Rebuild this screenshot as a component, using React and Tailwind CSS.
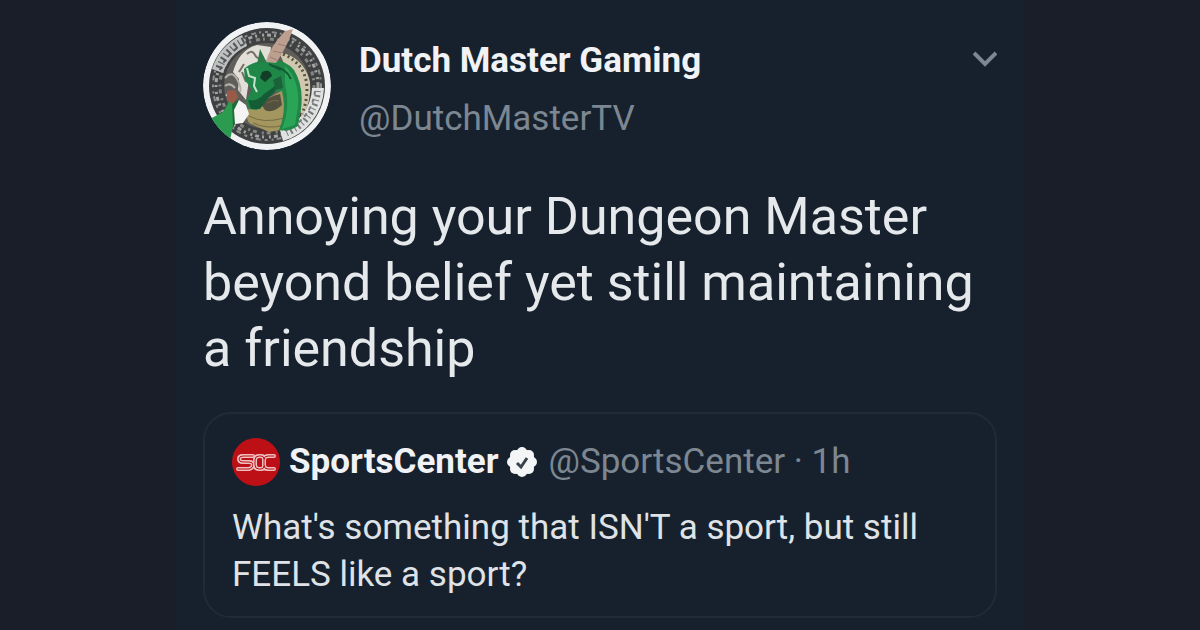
// Dark themed post with a quoted post below it.

function DragonAvatar() {
  return (
    <svg viewBox="0 0 128 128" className="size-32 shrink-0" role="img" aria-label="Dutch Master Gaming">
      <defs>
        <clipPath id="avatar-disc">
          <circle cx="64" cy="64" r="64" />
        </clipPath>
      </defs>
      <g clipPath="url(#avatar-disc)">
        <circle cx="64" cy="64" r="64" fill="#f1f2f4" />
        <circle cx="64" cy="64" r="58" fill="#3f4041" />
        {/* ring ornaments */}
        <circle cx="64" cy="64" r="54" fill="none" stroke="#8d8f8f" strokeWidth="2" strokeDasharray="3 4 5 3 2 4" />
        <circle cx="64" cy="64" r="51" fill="none" stroke="#a3a5a4" strokeWidth="3" strokeDasharray="2 5 2 3 4 3" />
        <circle cx="64" cy="64" r="47" fill="none" stroke="#85867f" strokeWidth="3" strokeDasharray="4 3 2 5" />
        {/* light banners on the ring */}
        <path d="M9 47 A57 57 0 0 1 39 13 L44 24 A45 45 0 0 0 20 51Z" fill="#bfc1c1" />
        <path d="M121 66 A57 57 0 0 1 80 119 L77 108 A45 45 0 0 0 109 66Z" fill="#e0e1e1" />
        <path d="M16 46 A51 51 0 0 1 42 18" fill="none" stroke="#55585a" strokeWidth="7" strokeDasharray="2 3 1 3" />
        <path d="M17 48 A48 48 0 0 1 41 22" fill="none" stroke="#55585a" strokeWidth="2" strokeDasharray="4 4" />
        <path d="M115 69 A51 51 0 0 1 82 112" fill="none" stroke="#77797a" strokeWidth="6" strokeDasharray="1 3 2 3" />
        <path d="M112 69 A48 48 0 0 1 81 109" fill="none" stroke="#77797a" strokeWidth="2" strokeDasharray="4 4" />
        <circle cx="64" cy="64" r="43" fill="#5f5e5a" />
        {/* smoke */}
        <path d="M30 50 Q36 28 54 23 L68 25 L66 40 L50 46 L46 58 L43 78 L35 68 L36 57Z" fill="#e2dfd8" />
        <path d="M44 32 Q49 27 52 33 T60 34 M36 50 L41 42 M43 60 L39 50" stroke="#77706a" strokeWidth="2" fill="none" />
        <path d="M22 56 Q29 48 34 57 T37 70 M22 64 Q27 60 32 66 M23 74 Q27 68 29 74" stroke="#b3b0aa" strokeWidth="2" fill="none" />
        {/* scaled crest behind the neck */}
        <path d="M76 30 Q101 35 107 60 Q109 79 99 96 L92 67Z" fill="#d0c8ae" />
        <path d="M80 32 Q103 42 104 66 Q104 80 99 92" stroke="#57513f" strokeWidth="3" fill="none" strokeDasharray="2 3" />
        {/* belly */}
        <path d="M41 90 L58 80 L80 68 L84 107 L66 110 L46 101Z" fill="#a3965f" />
        <path d="M58 82 Q66 74 77 72 L79 83 Q69 92 62 88Z" fill="#53503f" />
        <path d="M64 81 Q70 77 76 79 M46 94 Q60 102 81 96 M50 101 Q65 108 82 103" stroke="#756b43" strokeWidth="1" fill="none" />
        {/* neck and head */}
        <path d="M60 39 Q80 35 91 48 Q101 64 98 87 L95 104 Q86 110 76 108 Q84 88 79 69 L68 70 L62 80 L54 88 L46 87 L43 79 L49 68 L42 58 L41 47 Q48 40 60 39Z" fill="#1f8747" />
        <path d="M82 44 Q97 58 95 84 L92 103 L79 107 Q88 85 82 62Z" fill="#2aa557" />
        <path d="M45 78 Q54 80 61 72 L72 64 Q75 69 66 75 L57 87 L48 87Z" fill="#155c36" />
        <path d="M59 50 Q67 46 69 54 L62 60 L57 56Z" fill="#123e27" />
        <path d="M70 58 L78 54 L80 66 L73 68Z" fill="#1b6139" />
        <path d="M44 46 L46 54 L52 56 L51 64 L54 70" stroke="#c5e2cc" strokeWidth="2" fill="none" />
        <path d="M70 44 Q83 46 88 57 M66 42 L78 48" stroke="#145a33" strokeWidth="2" fill="none" />
        {/* horns */}
        <path d="M63 40 Q66 26 82 9 L90 7 Q84 25 73 41Z" fill="#bd9f90" />
        <path d="M67 35 L74 38 M70 29 L79 31 M75 22 L83 24" stroke="#9a7d6d" strokeWidth="1" />
        <path d="M54 42 L57 27 L63 39Z" fill="#2b7a49" />
        {/* tail and claw */}
        <path d="M7 97 L20 90 L27 78 L32 82 L31 100 L27 118 L12 108Z" fill="#2b9b4f" />
        <path d="M29 80 L36 78 L35 92 L30 106Z" fill="#1f6b3b" />
        <path d="M24 69 L32 68 L35 75 L30 82 L24 78Z" fill="#9b5a48" />
        <path d="M31 88 L36 78 L43 83 L46 92 L40 101 L32 102Z" fill="#f3f4f3" />
      </g>
    </svg>
  );
}

function SportsCenterLogo() {
  return (
    <svg viewBox="0 0 48 48" className="size-12 shrink-0" role="img" aria-label="SportsCenter">
      <circle cx="24" cy="24" r="24" fill="#bd1016" />
      <g fill="none" strokeLinejoin="round" strokeLinecap="round">
        <path d="M21 18H11q-4 0-4 3t4 3h6q4 0 4 3t-4 4H6" stroke="#eec0bf" strokeWidth="4" />
        <path d="M21 18H11q-4 0-4 3t4 3h6q4 0 4 3t-4 4H6" stroke="#bd1016" strokeWidth="1" />
        <path d="M32 21q0-3-3-3h-2q-4 0-4 4v5q0 4 4 4h2q3 0 3-3M42 18h-6q-4 0-4 4v5q0 4 4 4h6" stroke="#eec0bf" strokeWidth="4" />
        <path d="M32 21q0-3-3-3h-2q-4 0-4 4v5q0 4 4 4h2q3 0 3-3M42 18h-6q-4 0-4 4v5q0 4 4 4h6" stroke="#bd1016" strokeWidth="1" />
      </g>
    </svg>
  );
}

function VerifiedBadge() {
  return (
    <svg viewBox="0 0 32 32" className="size-8 shrink-0" role="img" aria-label="Verified">
      <g fill="#f3f5f7">
        <circle cx="16" cy="16" r="13" />
        <circle cx="16" cy="6" r="5" />
        <circle cx="23" cy="9" r="5" />
        <circle cx="26" cy="16" r="5" />
        <circle cx="23" cy="23" r="5" />
        <circle cx="16" cy="26" r="5" />
        <circle cx="9" cy="23" r="5" />
        <circle cx="6" cy="16" r="5" />
        <circle cx="9" cy="9" r="5" />
      </g>
      <path d="M11 17l4 4 6-9" fill="none" stroke="#3a424b" strokeWidth="3" />
    </svg>
  );
}

function QuotedPost() {
  return (
    <section className="mt-[30px] rounded-[28px] border-2 border-[#202b36] px-[27px] pt-6 pb-[18px]">
      <div className="flex items-center text-[35px] leading-[48px]">
        <SportsCenterLogo />
        <a href="#sportscenter" className="ml-[9px] font-bold text-[#f0f2f5]">SportsCenter</a>
        <span className="mr-2.5 ml-2"><VerifiedBadge /></span>
        <span className="whitespace-nowrap text-[#7c8792]">@SportsCenter · 1h</span>
      </div>
      <p className="mt-[18px] text-[35px] leading-[47px] text-[#dfe3e7]">
        What's something that ISN'T a sport, but still FEELS like a sport?
      </p>
    </section>
  );
}

export default function App() {
  return (
    <div className="min-h-screen bg-[#191e29] font-['Roboto',sans-serif]">
      <article className="mx-auto min-h-screen max-w-[848px] bg-[#17212d] px-[27px] pt-[22px] pb-3">
        <header className="flex items-start">
          <DragonAvatar />
          <div className="ml-7 grow pt-3.5">
            <h1 className="text-[35px] leading-[50px] font-bold text-[#f0f2f5]">Dutch Master Gaming</h1>
            <a href="#profile" className="mt-2 block text-[35px] leading-[50px] text-[#7c8792]">@DutchMasterTV</a>
          </div>
          <button aria-label="More options" className="mt-6 text-[#7c8792]">
            <svg viewBox="0 0 24 24" className="size-6" fill="none" stroke="currentColor" strokeWidth="4">
              <path d="M1 7l11 11L23 7" />
            </svg>
          </button>
        </header>
        <p className="mt-[34px] text-[52px] leading-[66px] text-[#e6e9ec]">
          Annoying your Dungeon Master beyond belief yet still maintaining a friendship
        </p>
        <QuotedPost />
      </article>
    </div>
  );
}
